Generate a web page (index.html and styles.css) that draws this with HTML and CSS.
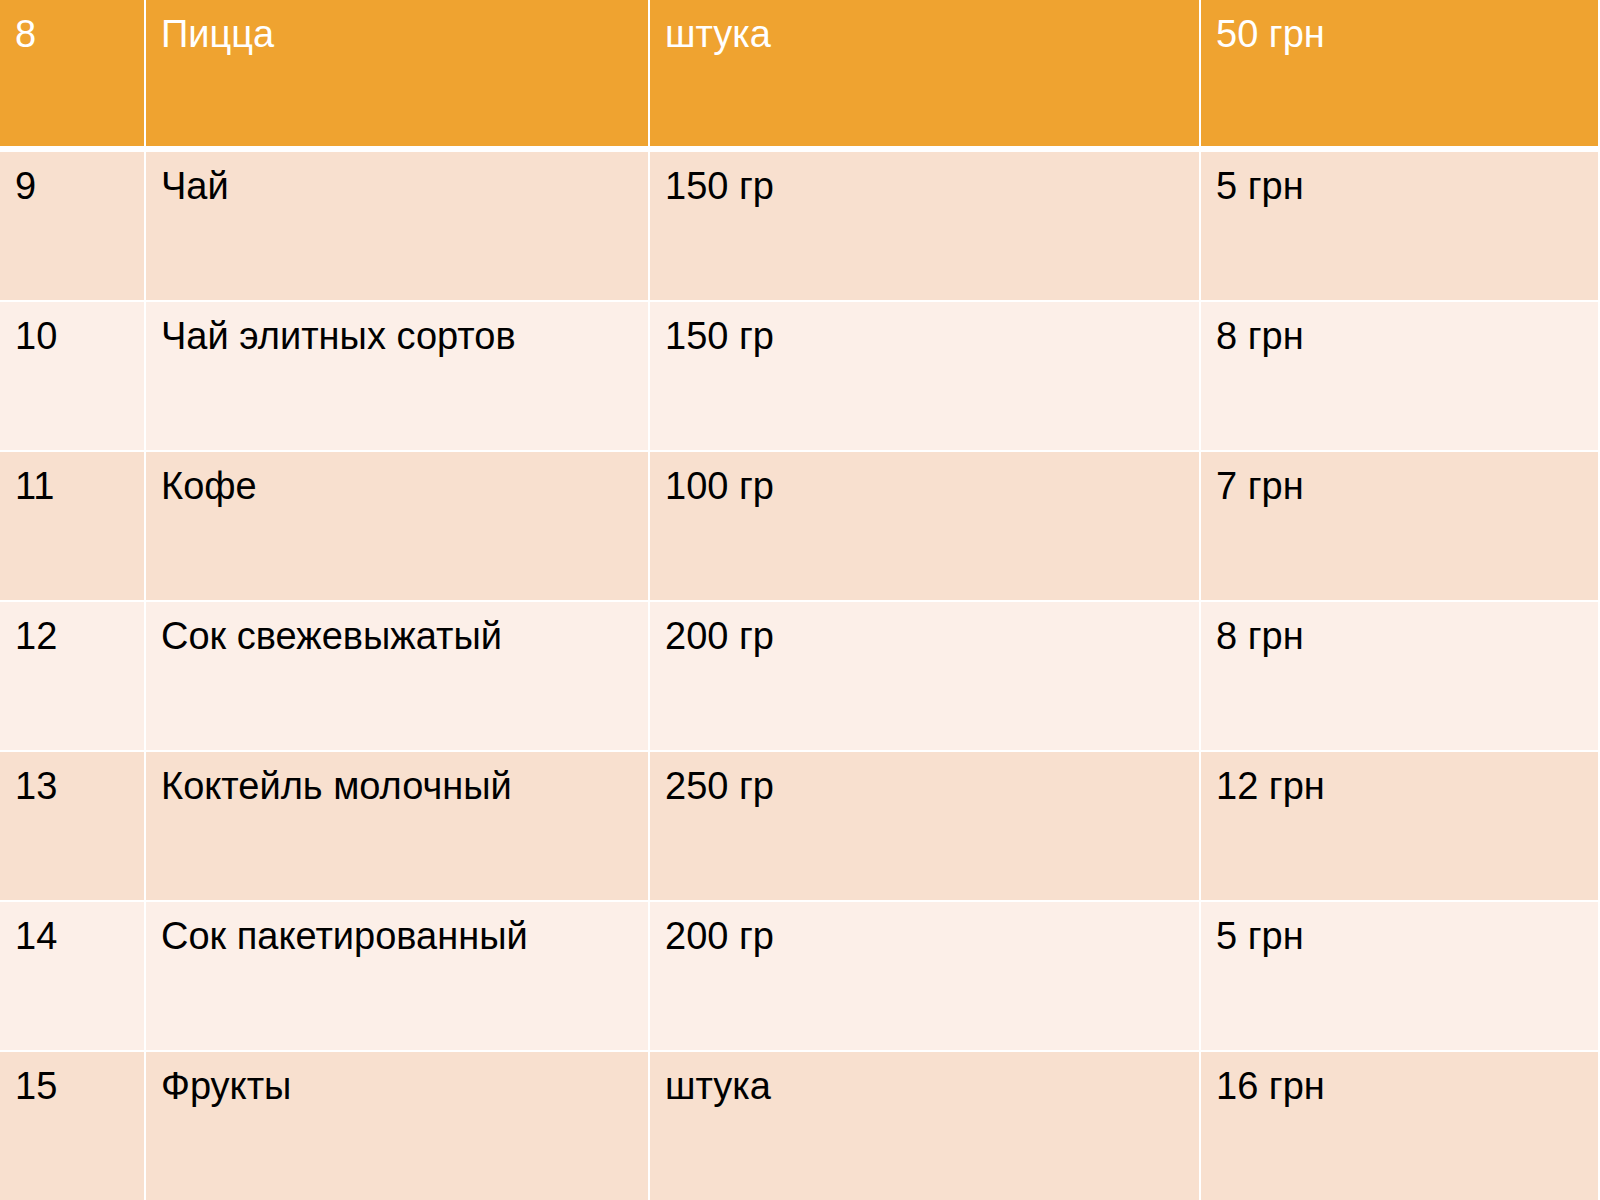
FILE: index.html
```html
<!DOCTYPE html>
<html lang="ru">
<head>
<meta charset="utf-8">
<title>Меню</title>
<link rel="stylesheet" href="styles.css">
</head>
<body>
<div class="table">
  <div class="row head"><div class="cell">8</div><div class="cell">Пицца</div><div class="cell">штука</div><div class="cell">50 грн</div></div>
  <div class="body">
    <div class="row dark"><div class="cell">9</div><div class="cell">Чай</div><div class="cell">150 гр</div><div class="cell">5 грн</div></div>
    <div class="row light"><div class="cell">10</div><div class="cell">Чай элитных сортов</div><div class="cell">150 гр</div><div class="cell">8 грн</div></div>
    <div class="row dark"><div class="cell">11</div><div class="cell">Кофе</div><div class="cell">100 гр</div><div class="cell">7 грн</div></div>
    <div class="row light"><div class="cell">12</div><div class="cell">Сок свежевыжатый</div><div class="cell">200 гр</div><div class="cell">8 грн</div></div>
    <div class="row dark"><div class="cell">13</div><div class="cell">Коктейль молочный</div><div class="cell">250 гр</div><div class="cell">12 грн</div></div>
    <div class="row light"><div class="cell">14</div><div class="cell">Сок пакетированный</div><div class="cell">200 гр</div><div class="cell">5 грн</div></div>
    <div class="row dark"><div class="cell">15</div><div class="cell">Фрукты</div><div class="cell">штука</div><div class="cell">16 грн</div></div>
  </div>
</div>
</body>
</html>
```
FILE: styles.css
```css
html, body {
  margin: 0;
  padding: 0;
  background: #ffffff;
}
.table {
  width: 1598px;
  display: flex;
  flex-direction: column;
  font-family: "Liberation Sans", Arial, sans-serif;
  font-size: 38px;
  line-height: 44px;
}
.row {
  display: grid;
  grid-template-columns: 144px 502px 549px 1fr;
  column-gap: 2px;
  height: 148px;
}
.head {
  height: 146px;
  margin-bottom: 6px;
}
.body {
  display: flex;
  flex-direction: column;
  gap: 2px;
}
.cell {
  padding: 12px 15px 0 15px;
}
.head .cell {
  background: #efa330;
  color: #ffffff;
}
.dark .cell {
  background: #f8e0cf;
  color: #000000;
}
.light .cell {
  background: #fcefe8;
  color: #000000;
}
```
